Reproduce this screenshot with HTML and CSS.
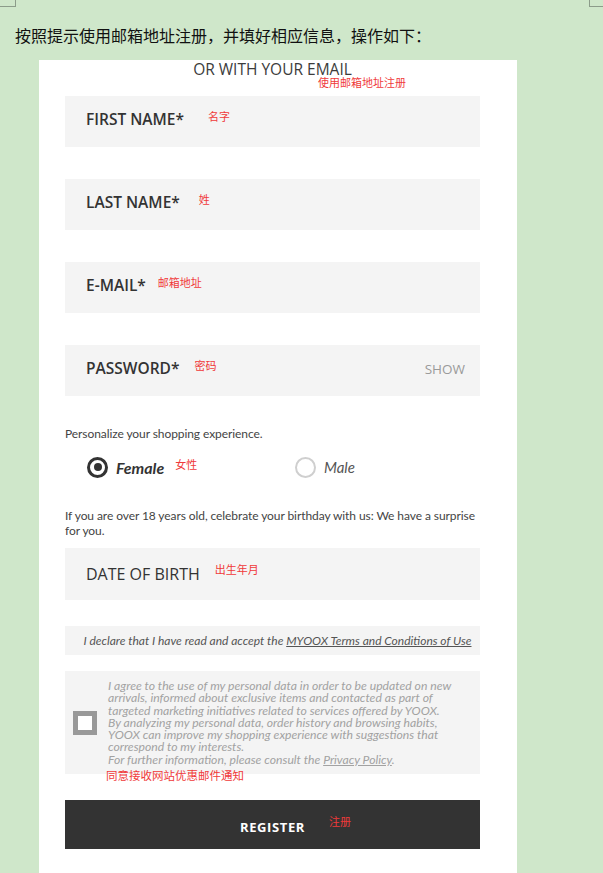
FILE: index.html
```html
<!DOCTYPE html>
<html lang="zh">
<head>
<meta charset="utf-8">
<title>注册</title>
<link rel="stylesheet" href="styles.css">
</head>
<body>
<div class="corner corner-tl"></div>
<div class="corner corner-tr"></div>
<p class="intro">按照提示使用邮箱地址注册，并填好相应信息，操作如下：</p>
<main class="card">
  <h2 class="title">OR WITH YOUR EMAIL<span class="note note-title">使用邮箱地址注册</span></h2>
  <div class="fields">
    <div class="field"><span class="label">FIRST NAME*</span><span class="note note-wide">名字</span></div>
    <div class="field"><span class="label">LAST NAME*</span><span class="note note-mid">姓</span></div>
    <div class="field"><span class="label">E-MAIL*</span><span class="note note-tight">邮箱地址</span></div>
    <div class="field"><span class="label">PASSWORD*</span><span class="note">密码</span><span class="show">SHOW</span></div>
  </div>
  <p class="text personal">Personalize your shopping experience.</p>
  <div class="radios">
    <label class="option"><span class="radio radio-on"></span><span class="opt-text opt-on">Female</span><span class="note">女性</span></label>
    <label class="option"><span class="radio"></span><span class="opt-text">Male</span></label>
  </div>
  <p class="text birthday">If you are over 18 years old, celebrate your birthday with us: We have a surprise<br>for you.</p>
  <div class="field field-dob"><span class="label label-light">DATE OF BIRTH</span><span class="note">出生年月</span></div>
  <div class="terms">I declare that I have read and accept the <u>MYOOX Terms and Conditions of Use</u></div>
  <div class="consent">
    <span class="checkbox"></span>
    <p class="consent-text">I agree to the use of my personal data in order to be updated on new<br>arrivals, informed about exclusive items and contacted as part of<br>targeted marketing initiatives related to services offered by YOOX.<br>By analyzing my personal data, order history and browsing habits,<br>YOOX can improve my shopping experience with suggestions that<br>correspond to my interests.<br>For further information, please consult the <u>Privacy Policy</u>.</p>
    <span class="note note-consent">同意接收网站优惠邮件通知</span>
  </div>
  <button class="register" type="button">REGISTER<span class="note note-btn">注册</span></button>
</main>
</body>
</html>
```
FILE: styles.css
```css
html, body {
  margin: 0;
  padding: 0;
}
body {
  background: #cfe7ca;
  width: 603px;
  height: 873px;
  overflow: hidden;
  position: relative;
  font-family: "Noto Sans CJK SC", sans-serif;
}
.corner {
  position: absolute;
  top: 0;
  width: 15px;
  height: 6px;
  border-bottom: 1px solid #8c9c8a;
}
.corner-tl {
  left: 0;
  border-right: 1px solid #8c9c8a;
}
.corner-tr {
  left: 589px;
  border-left: 1px solid #8c9c8a;
}
.intro {
  margin: 0;
  padding: 25px 0 0 15px;
  height: 35px;
  font-size: 16px;
  line-height: 20px;
  color: #111;
  font-family: "Noto Sans CJK SC", sans-serif;
}
.card {
  margin-left: 39px;
  width: 452px;
  padding: 0 0 40px 26px;
  background: #fff;
  display: flex;
  flex-direction: column;
}
.note {
  font-family: "Noto Sans CJK SC", sans-serif;
  font-size: 11px;
  font-weight: 400;
  font-style: normal;
  color: #f03a3a;
  line-height: 12px;
  letter-spacing: 0;
}
.title {
  margin: 0;
  height: 36px;
  box-sizing: border-box;
  padding-top: 0;
  width: 415px;
  position: relative;
  text-align: center;
  font-family: "Open Sans", sans-serif;
  font-weight: 400;
  font-size: 15.5px;
  line-height: 18px;
  color: #3c3c3c;
}
.note-title {
  position: absolute;
  left: 253px;
  top: 16px;
}
.fields {
  display: flex;
  flex-direction: column;
  gap: 32px;
}
.field {
  width: 415px;
  height: 51px;
  box-sizing: border-box;
  padding: 0 15px 0 21px;
  background: #f4f4f4;
  display: flex;
  align-items: center;
}
.label {
  font-family: "Open Sans", sans-serif;
  font-weight: 600;
  font-size: 15.5px;
  color: #333;
  margin-top: -5px;
}
.field .note {
  align-self: flex-start;
  margin-top: 14px;
  margin-left: 15px;
}
.field .note-wide {
  margin-left: 24px;
}
.field .note-mid {
  margin-left: 19px;
}
.field .note-tight {
  margin-left: 12px;
}
.show {
  margin-left: auto;
  font-family: "Open Sans", sans-serif;
  font-size: 13.5px;
  color: #9a9a9a;
  margin-top: -3px;
}
.text {
  margin: 0;
  font-family: "Lato", sans-serif;
  font-size: 12px;
  letter-spacing: -0.08px;
  color: #444;
}
.personal {
  margin-top: 30px;
  line-height: 16px;
}
.radios {
  margin-top: 10px;
  height: 30px;
  display: flex;
  align-items: center;
  padding-left: 22px;
}
.option {
  display: flex;
  align-items: center;
  width: 208px;
}
.radio {
  width: 21px;
  height: 21px;
  box-sizing: border-box;
  border-radius: 50%;
  border: 2px solid #cfcfcf;
  background: #fff;
  position: relative;
  flex: none;
}
.radio-on {
  border: 3px solid #333;
}
.radio-on::after {
  content: "";
  position: absolute;
  left: 3.5px;
  top: 3.5px;
  width: 8px;
  height: 8px;
  border-radius: 50%;
  background: #333;
}
.opt-text {
  margin-left: 8px;
  font-family: "Lato", sans-serif;
  font-style: italic;
  font-size: 15px;
  color: #555;
}
.opt-on {
  font-size: 16px;
  font-weight: 700;
  color: #333;
}
.option .note {
  margin-left: 11px;
  margin-top: -6px;
}
.birthday {
  margin-top: 26px;
  line-height: 15px;
}
.field-dob {
  margin-top: 10px;
  height: 52px;
}
.label-light {
  font-weight: 400;
  font-size: 16px;
  margin-top: 0;
}
.field-dob .note {
  margin-top: 15px;
}
.terms {
  margin-top: 26px;
  width: 415px;
  height: 29px;
  box-sizing: border-box;
  padding-left: 10px;
  background: #f4f4f4;
  text-align: center;
  font-family: "Lato", sans-serif;
  font-style: italic;
  font-size: 12px;
  line-height: 29px;
  color: #555;
}
.consent {
  margin-top: 16px;
  width: 415px;
  height: 103px;
  box-sizing: border-box;
  padding-left: 8px;
  background: #f4f4f4;
  display: flex;
  align-items: center;
  position: relative;
}
.checkbox {
  width: 24px;
  height: 24px;
  box-sizing: border-box;
  border: 5px solid #999;
  background: #fff;
  flex: none;
}
.consent-text {
  margin: 1px 0 0 11px;
  font-family: "Lato", sans-serif;
  font-style: italic;
  font-size: 12.2px;
  line-height: 12.3px;
  color: #a2a2a2;
  white-space: nowrap;
}
.note-consent {
  position: absolute;
  left: 41px;
  top: 98px;
  font-size: 11.5px;
}
.register {
  margin-top: 26px;
  width: 415px;
  height: 49px;
  border: 0;
  background: #333;
  color: #fff;
  font-family: "Open Sans", sans-serif;
  font-weight: 700;
  font-size: 13px;
  letter-spacing: 0.6px;
  line-height: 49px;
  position: relative;
  padding: 3px 0 0;
  box-sizing: border-box;
}
.note-btn {
  position: absolute;
  left: 264px;
  top: 15px;
}
```
